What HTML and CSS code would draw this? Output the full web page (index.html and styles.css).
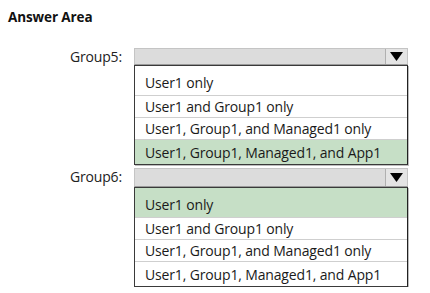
FILE: index.html
```html
<!DOCTYPE html>
<html>
<head>
<meta charset="utf-8">
<link rel="stylesheet" href="styles.css">
</head>
<body>
<div class="page">
  <h1 class="title">Answer Area</h1>
  <div class="group group-first">
    <div class="label">Group5:</div>
    <div class="control">
      <div class="bar"><span class="arrow"><svg width="13" height="9" viewBox="0 0 13 9"><path d="M0 0H13L6.5 9Z" fill="#000"/></svg></span></div>
      <ul class="list">
        <li class="row r1">User1 only</li>
        <li class="row r2">User1 and Group1 only</li>
        <li class="row r3">User1, Group1, and Managed1 only</li>
        <li class="row r4 sel">User1, Group1, Managed1, and App1</li>
      </ul>
    </div>
  </div>
  <div class="group group-second">
    <div class="label">Group6:</div>
    <div class="control">
      <div class="bar"><span class="arrow"><svg width="13" height="9" viewBox="0 0 13 9"><path d="M0 0H13L6.5 9Z" fill="#000"/></svg></span></div>
      <ul class="list">
        <li class="row r1 sel">User1 only</li>
        <li class="row r2">User1 and Group1 only</li>
        <li class="row r3">User1, Group1, and Managed1 only</li>
        <li class="row r4">User1, Group1, Managed1, and App1</li>
      </ul>
    </div>
  </div>
</div>
</body>
</html>
```
FILE: styles.css
```css
html, body {
  margin: 0;
  padding: 0;
  background: #fff;
}
body {
  font-family: "Open Sans", "Noto Sans", sans-serif;
  color: #111;
}
.page {
  padding: 8px 0 0 8px;
}
.title {
  margin: 0;
  font-size: 13.5px;
  font-weight: 700;
  line-height: 18px;
  color: #111;
  letter-spacing: -0.1px;
}
.group {
  display: grid;
  grid-template-columns: 126px 274px;
  align-items: start;
}
.group-first {
  margin-top: 22px;
}
.group-second {
  margin-top: 3px;
}
.label {
  text-align: right;
  padding-right: 12px;
  font-size: 14px;
  line-height: 17px;
  color: #222;
  letter-spacing: -0.15px;
}
.control {
  display: flex;
  flex-direction: column;
}
.bar {
  height: 15px;
  background: #dcdcdc;
  border: 1px solid #c4c4c4;
  border-bottom-color: #9a9a9a;
  display: flex;
  justify-content: flex-end;
}
.group-second .bar {
  height: 17px;
}
.arrow {
  width: 21px;
  border-left: 1px solid #b0b0b0;
  background: #e4e4e4;
  display: flex;
  align-items: center;
  justify-content: center;
}
.list {
  list-style: none;
  margin: 0;
  padding: 0;
  border: 1px solid #3a3a3a;
  border-right-color: #222;
  box-shadow: 1px 1px 0 #bdbdbd;
  width: 272px;
}
.row {
  padding-left: 10px;
  font-size: 14px;
  letter-spacing: -0.15px;
  color: #1a1a1a;
  display: flex;
  align-items: center;
  border-top: 1px solid #cfcfcf;
  box-sizing: border-box;
}
.row.r1 {
  border-top: none;
  height: 29px;
  padding-top: 3px;
}
.row.r2 { height: 22px; }
.row.r3 { height: 22px; }
.row.r4 { height: 25px; }
.sel {
  background: #c6dfc6;
}
```
